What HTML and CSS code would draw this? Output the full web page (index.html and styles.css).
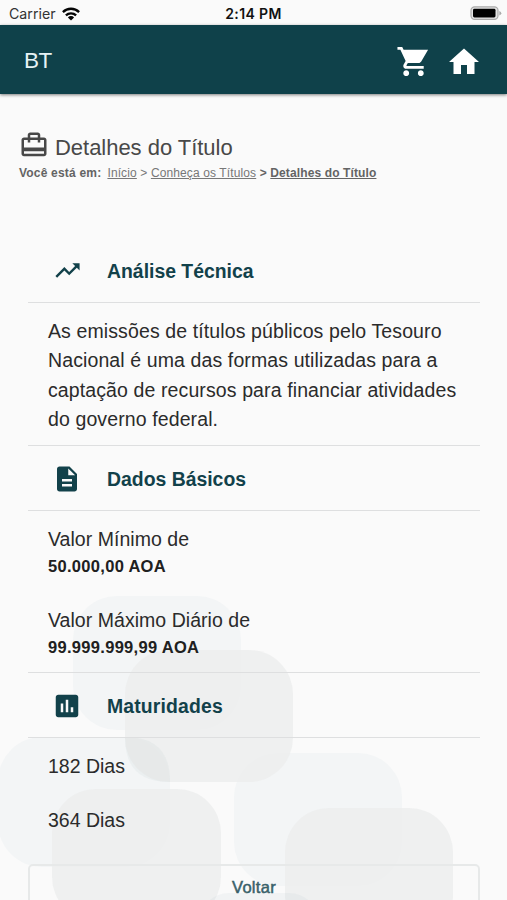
FILE: index.html
```html
<!DOCTYPE html>
<html lang="pt">
<head>
<meta charset="utf-8">
<title>Detalhes do Título</title>
<link rel="stylesheet" href="styles.css">
</head>
<body>
<svg class="backdrop" viewBox="0 0 507 320" aria-hidden="true">
  <g fill="#f3f5f6">
    <rect x="73" y="16" width="168" height="134" rx="44"/>
    <rect x="-2" y="157" width="172" height="130" rx="44"/>
    <rect x="234" y="173" width="168" height="133" rx="44"/>
  </g>
  <g fill="#eceeee" fill-opacity=".8">
    <rect x="125" y="70" width="168" height="132" rx="44"/>
    <rect x="52" y="209" width="169" height="132" rx="44"/>
    <rect x="285" y="228" width="168" height="132" rx="44"/>
  </g>
  <path d="M125 157h1q44 0 44 44v1h-1q-44 0-44-44z" fill="#7d959b" fill-opacity=".06"/>
  <rect x="199" y="313" width="120" height="100" rx="30" fill="#a9bac0" fill-opacity=".1"/>
</svg>
<div class="status">
  <div class="carrier"><span>Carrier</span>
    <svg width="18" height="14" viewBox="0 0 18 14"><g fill="none" stroke="#050505" stroke-width="2.3"><path d="M.9 5.1a11.5 11.5 0 0 1 16.2 0"/><path d="M3.9 8.4a7.2 7.2 0 0 1 10.2 0"/></g><path d="M9 13.5 5.900 10.400a4.400 4.400 0 0 1 6.200 0z" fill="#050505"/></svg>
  </div>
  <span class="clock">2:14 PM</span>
  <svg class="battery" width="32" height="15" viewBox="0 0 32 15"><rect x="1" y=".8" width="27" height="12.6" rx="3.6" fill="#e4e4e4" stroke="#aaa" stroke-width="1.2"/><rect x="3" y="2.8" width="22.500" height="8.6" rx="1.4" fill="#000"/><path d="M29.300 5v4.600q2-.8 2-2.300t-2-2.300z" fill="#aaa"/></svg>
</div>
<header class="toolbar">
  <span class="brand">BT</span>
  <nav class="actions">
    <svg width="35" height="35" viewBox="0 0 24 24"><path fill="#fff" d="M7 18c-1.100 0-1.990.9-1.990 2S5.900 22 7 22s2-.9 2-2-.9-2-2-2zM1 2v2h2l3.600 7.590-1.350 2.450c-.16.28-.25.61-.25.960 0 1.100.9 2 2 2h12v-2H7.420c-.14 0-.25-.11-.25-.25l.03-.12.9-1.630h7.450c.75 0 1.410-.41 1.750-1.030L22 4H5.210l-.94-2H1zm16 16c-1.100 0-1.990.9-1.990 2s.89 2 1.990 2 2-.9 2-2-.9-2-2-2z"/></svg>
    <svg width="36" height="36" viewBox="0 0 24 24"><path fill="#fff" d="M10 20v-6h4v6h5v-8h3L12 3 2 12h3v8z"/></svg>
  </nav>
</header>
<main>
  <div class="heading">
    <svg width="30" height="30" viewBox="0 0 24 24"><path fill="#484848" d="M20 6h-3V4c0-1.110-.89-2-2-2H9c-1.110 0-2 .89-2 2v2H4c-1.110 0-2 .89-2 2v11c0 1.110.89 2 2 2h16c1.110 0 2-.89 2-2V8c0-1.110-.89-2-2-2zM9 4h6v2H9V4zm11 15H4v-2h16v2zm0-5H4V8h3v2h2V8h6v2h2V8h3v6z"/></svg>
    <h1>Detalhes do Título</h1>
  </div>
  <div class="crumbs"><b class="here">Você está em:</b><a>Início</a> &gt; <a>Conheça os Títulos</a> <b>&gt; <a>Detalhes do Título</a></b></div>
  <div class="panel">
    <section>
      <h2><svg width="29" height="29" viewBox="0 0 24 24"><path fill="#12414a" d="M16 6l2.290 2.290-4.880 4.880-4-4L2 16.590 3.410 18l6-6 4 4 6.300-6.290L22 12V6z"/></svg><span>Análise Técnica</span></h2>
      <p class="summary">As emissões de títulos públicos pelo Tesouro<br>Nacional é uma das formas utilizadas para a<br>captação de recursos para financiar atividades<br>do governo federal.</p>
    </section>
    <section>
      <h2><svg width="30" height="30" viewBox="0 0 24 24"><path fill="#12414a" d="M14 2H6c-1.100 0-1.990.9-1.990 2L4 20c0 1.100.89 2 1.990 2H18c1.100 0 2-.9 2-2V8l-6-6zm2 16H8v-2h8v2zm0-4H8v-2h8v2zm-3-5V3.500L18.500 9H13z"/></svg><span>Dados Básicos</span></h2>
      <dl>
        <div><dt>Valor Mínimo de</dt><dd>50.000,00 AOA</dd></div>
        <div><dt>Valor Máximo Diário de</dt><dd>99.999.999,99 AOA</dd></div>
      </dl>
    </section>
    <section>
      <h2><svg width="30" height="30" viewBox="0 0 24 24"><path fill="#12414a" d="M19 3H5c-1.100 0-2 .9-2 2v14c0 1.100.9 2 2 2h14c1.100 0 2-.9 2-2V5c0-1.100-.9-2-2-2zM9 17H7v-7h2v7zm4 0h-2V7h2v10zm4 0h-2v-4h2v4z"/></svg><span class="wide">Maturidades</span></h2>
      <ul><li>182 Dias</li><li>364 Dias</li></ul>
    </section>
    <button class="back">Voltar</button>
  </div>
</main>
</body>
</html>
```

FILE: styles.css
```css
* { box-sizing: border-box; margin: 0; padding: 0; }
html, body { height: 900px; overflow: hidden; }
body { position: relative; background: #fafafa; color: #2b2b2b; font-family: "Liberation Sans", Arial, sans-serif; }
svg { display: block; flex: none; }
.backdrop { position: absolute; left: 0; top: 580px; width: 507px; height: 320px; z-index: -1; }
.status { height: 25px; display: grid; grid-template-columns: 1fr auto 1fr; align-items: center; padding: 2px 5px 0 9px; background: #fafafa; }
.carrier { display: flex; align-items: center; gap: 6px; font: 14.2px/20px Inter, sans-serif; color: #333; }
.clock { font: 600 14px/20px Inter, sans-serif; letter-spacing: .4px; margin-left: -4px; color: #111; }
.battery { justify-self: end; }
.toolbar { height: 69px; padding: 0 25px 0 24px; display: flex; justify-content: space-between; align-items: center; background: #0f414a; box-shadow: 0 1px 3px rgba(0,0,0,.5); }
.brand { font-size: 22.5px; line-height: 30px; letter-spacing: -.5px; padding-top: 3px; color: #e6f2f5; }
.actions { display: flex; align-items: center; gap: 15px; margin: 4px 0 0; }
main { padding: 36px 27px 0 28px; }
.heading { display: flex; align-items: center; height: 34px; margin-left: -9px; gap: 6px; color: #484848; }
.heading svg { margin-top: -4px; }
h1 { font-size: 22px; line-height: 30px; font-weight: 400; padding-top: 2px; letter-spacing: -.03px; }
.crumbs { margin-left: -9px; height: 18px; font-size: 12px; line-height: 18px; letter-spacing: .12px; color: #777; white-space: nowrap; }
.crumbs b { color: #646464; }
.crumbs a { text-decoration: underline; }
.crumbs .here { margin-right: 6px; letter-spacing: .2px; }
.panel { margin-top: 56px; }
section { border-bottom: 1px solid #dedfe0; }
section:last-of-type { border-bottom: 0; }
h2 { height: 65px; display: grid; grid-template-columns: 39px auto; justify-items: center; justify-content: start; column-gap: 20px; align-items: center; padding: 2px 0 0 20px; border-bottom: 1px solid #dedfe0; font-size: 19.4px; line-height: 28px; color: #12414a; }
h2 svg { margin-left: -1px; margin-top: -1px; }
.wide { letter-spacing: .15px; }
.summary { height: 142px; padding: 14px 0 0 20px; font-size: 19.5px; line-height: 29.3px; letter-spacing: .11px; white-space: nowrap; }
dl { height: 161px; padding: 14px 0 0 20px; display: grid; grid-template-rows: 81px 1fr; }
dt { font-size: 19.5px; line-height: 28px; letter-spacing: .04px; }
dd { font-size: 16.5px; line-height: 27px; font-weight: 700; letter-spacing: .3px; color: #202020; }
ul { list-style: none; height: 126px; padding: 14px 0 0 20px; }
li { font-size: 19.5px; line-height: 28px; margin-bottom: 26px; }
.back { display: block; width: 100%; height: 46px; border: 2px solid #e7e9e9; border-radius: 5px; background: transparent; font: 400 16.5px/24px "Liberation Sans", Arial, sans-serif; letter-spacing: .3px; -webkit-text-stroke: .5px #39616a; color: #39616a; }
```
